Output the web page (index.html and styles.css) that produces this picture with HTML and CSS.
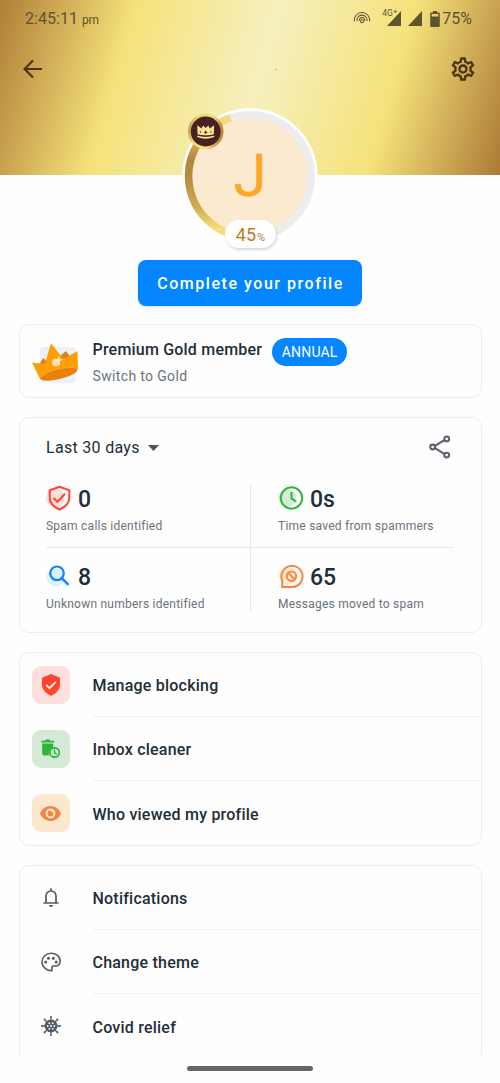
FILE: index.html
```html
<!DOCTYPE html>
<html lang="en">
<head>
<meta charset="utf-8">
<title>Profile</title>
<link rel="stylesheet" href="styles.css">
</head>
<body>
<div class="screen">
  <header class="header">
    <div class="status">
      <div class="clock">2:45:11<span class="ampm">pm</span></div>
      <div class="status-icons">
        <svg class="hotspot" width="18" height="14" viewBox="0 0 18 14" fill="none" stroke="currentColor" stroke-width="1.050"><path d="M1.300 11.400A7.700 7.700 0 0 1 9 2.600A7.700 7.700 0 0 1 16.700 11.400M4 11.200A5.100 5.100 0 0 1 9 5.100A5.100 5.100 0 0 1 14 11.200M6.300 10.900A2.800 2.800 0 0 1 9 7.500A2.800 2.800 0 0 1 11.700 10.900"/><circle cx="9" cy="11.200" r="1.500"/></svg>
        <span class="net">4G<sup>+</sup></span>
        <svg class="signal" width="14" height="15" viewBox="0 0 14 15"><path d="M14 0v15H0z" fill="currentColor"/></svg>
        <svg class="signal second" width="14" height="15" viewBox="0 0 14 15"><path d="M14 0v15H0z" fill="currentColor"/></svg>
        <svg class="battery" width="10" height="16" viewBox="0 0 10 16"><path fill="currentColor" fill-rule="evenodd" d="M3 0h4v1.400h1.800a1 1 0 0 1 1 1V15a1 1 0 0 1-1 1H1.200a1 1 0 0 1-1-1V2.400a1 1 0 0 1 1-1H3zM1.600 2.900v2.700h6.800V2.900z"/></svg>
        <span class="percent">75%</span>
      </div>
    </div>
    <div class="toolbar">
      <svg width="20" height="20" viewBox="0 0 20 20" fill="none" stroke="currentColor" stroke-width="2.200"><path d="M19 10H2M10 1.400L1.600 10L10 18.600"/></svg>
      <span class="speck"></span>
      <svg class="gear" width="28" height="28" viewBox="0 0 24 24" fill="currentColor"><path d="M19.430 12.980c.04-.32.07-.64.07-.98s-.03-.66-.07-.98l2.110-1.650c.19-.15.24-.42.12-.64l-2-3.460c-.09-.16-.26-.25-.44-.25-.06 0-.12.010-.17.030l-2.490 1c-.52-.4-1.080-.73-1.690-.98l-.38-2.650C14.460 2.180 14.250 2 14 2h-4c-.25 0-.46.18-.49.420l-.38 2.650c-.61.25-1.170.59-1.690.98l-2.490-1c-.06-.02-.12-.03-.18-.03-.17 0-.34.090-.43.250l-2 3.460c-.13.220-.07.490.12.640l2.110 1.650c-.04.320-.07.650-.07.980s.03.660.07.980l-2.110 1.650c-.19.150-.24.420-.12.640l2 3.460c.09.160.26.250.44.250.06 0 .12-.01.17-.03l2.490-1c.52.400 1.080.730 1.690.980l.38 2.650c.03.240.24.420.49.420h4c.25 0 .46-.18.49-.42l.38-2.650c.61-.25 1.170-.59 1.690-.98l2.490 1c.06.020.12.030.18.030.17 0 .34-.09.43-.25l2-3.460c.12-.22.07-.49-.12-.64l-2.110-1.650zm-1.980-1.710c.04.310.05.520.05.730s-.02.430-.05.730l-.14 1.130.89.700 1.080.840-.7 1.210-1.270-.51-1.040-.42-.9.680c-.43.320-.84.560-1.250.730l-1.060.430-.16 1.130-.2 1.350h-1.400l-.19-1.350-.16-1.130-1.060-.43c-.43-.18-.83-.41-1.230-.71l-.91-.7-1.060.430-1.270.510-.7-1.210 1.080-.84.890-.7-.14-1.130c-.03-.31-.05-.54-.05-.74s.02-.43.050-.73l.14-1.130-.89-.7-1.080-.84.700-1.210 1.270.510 1.040.420.900-.68c.43-.32.840-.56 1.250-.73l1.060-.43.160-1.130.2-1.350h1.390l.19 1.350.16 1.130 1.060.430c.43.180.83.410 1.230.710l.91.700 1.060-.43 1.270-.51.700 1.210-1.070.850-.89.700.14 1.130zM12 8c-2.210 0-4 1.790-4 4s1.790 4 4 4 4-1.790 4-4-1.790-4-4-4zm0 6c-1.100 0-2-.9-2-2s.9-2 2-2 2 .9 2 2-.9 2-2 2z"/></svg>
    </div>
  </header>

  <main class="content">
    <div class="avatar">
      <svg class="ring" width="136" height="136" viewBox="0 0 136 136">
        <defs>
          <linearGradient id="gold" x1="0" y1="0" x2="0" y2="1"><stop offset="0" stop-color="#f2dc7c"/><stop offset=".08" stop-color="#f0da78"/><stop offset=".25" stop-color="#c99e4c"/><stop offset=".36" stop-color="#b48539"/><stop offset=".5" stop-color="#b98c3f"/><stop offset=".75" stop-color="#d1ad52"/><stop offset=".93" stop-color="#f4e078"/></linearGradient>
          <linearGradient id="badge" x1="0" y1="0" x2="1" y2=".2"><stop offset="0" stop-color="#b98a3c"/><stop offset=".3" stop-color="#f0d874"/><stop offset=".7" stop-color="#f3df80"/><stop offset="1" stop-color="#b98a3c"/></linearGradient>
        </defs>
        <circle cx="68" cy="68" r="67.700" fill="#fff"/>
        <circle cx="68" cy="68" r="61.200" fill="#fbe9d0" stroke="#ededee" stroke-width="7.600"/>
        <path d="M68 129.200A61.200 61.200 0 0 1 48.600 9.900" fill="none" stroke="url(#gold)" stroke-width="7.600"/>
        <circle cx="23.700" cy="23.500" r="17.800" fill="url(#badge)"/>
        <circle cx="23.700" cy="23.500" r="15" fill="#482223"/>
        <path d="M15.300 17.200l4.200 3.300 1.600-3 2.600 2.400 2.600-2.400 1.600 3 4.200-3.300-.3 9.300q-8.100 2.200-16.200 0z" fill="#f7e392"/>
        <path d="M15.200 27.500q8.600 2.500 17 0v1.500q-8.500 3.300-17 0z" fill="#f7e392"/>
        <path d="M15.200 27q8.500 2.300 17 0" fill="none" stroke="#482223" stroke-width=".8"/>
        <path d="M23.700 22.400l.7 1.200 1.200.7-1.200.7-.7 1.200-.7-1.200-1.200-.7 1.200-.7z" fill="#482223"/><circle cx="18.400" cy="24" r=".7" fill="#482223"/><circle cx="29" cy="24" r=".7" fill="#482223"/>
      </svg>
      <span class="initial">J</span>
      <span class="progress">45<small>%</small></span>
    </div>

    <button class="complete">Complete your profile</button>

    <section class="card premium">
      <svg class="crown" width="48" height="42" viewBox="0 0 48 42">
        <rect x="8" y="3" width="35.500" height="36" rx="4" fill="#e8f1fc"/>
        <path d="M8 19l3-5 5 4-3 6zM28 12l6-5 5 7-5 5z" fill="#d98222"/>
        <path d="M0 18.500L13 20 18.500.5q.8-1 1.600 0L31.500 15 45.500 7 46 25q-3 5-15 8.500T10 36q-2-.5-3-3z" fill="#ff9f05"/>
        <path d="M9.500 33Q13 28 26 25t19.500-.5Q46 30 31 34T10 36q-2-1-.5-3z" fill="#e98106"/>
        <path d="M9.500 33Q13 28 26 25t19.500-.5" fill="none" stroke="#ffb64b" stroke-width=".7"/>
        <circle cx="24" cy="18.500" r="4" fill="#ffd9a6"/>
        <path d="M27 11l.6 4.300 4.200.3-4 1.300.3 4.100-2-3.300-4.200-.5 4-1.600z" fill="#fff6e5"/>
      </svg>
      <div class="member">
        <div class="member-title">Premium Gold member<span class="tag">ANNUAL</span></div>
        <div class="member-sub">Switch to Gold</div>
      </div>
    </section>

    <section class="card stats">
      <div class="stats-head">
        <div class="period">Last 30 days<svg width="11" height="6" viewBox="0 0 11 6"><path d="M0 0h11L5.500 6z" fill="#4b5560"/></svg></div>
        <svg width="22" height="24" viewBox="0 0 22 24" fill="none" stroke="#59616a" stroke-width="2.100"><path d="M6 10.800l9.300-5.600M6 13.200l9.300 5.600"/><circle cx="3.600" cy="12" r="2.400"/><circle cx="17.700" cy="3.900" r="2.400"/><circle cx="17.700" cy="20.100" r="2.400"/></svg>
      </div>
      <div class="grid">
        <div class="stat">
          <div class="value"><svg width="26" height="26" viewBox="0 0 26 26" fill="none" stroke="#ff4432" stroke-width="2"><circle cx="9.500" cy="13" r="9.500" fill="#ffdeda" stroke="none"/><path d="M13.500 1.700l9.800 3.500v7.300c0 5.600-3.600 9.400-9.800 12-6.200-2.600-9.800-6.400-9.800-12V5.200z"/><path d="M7.500 13l4 3.800 7.500-8"/></svg>0</div>
          <div class="label">Spam calls identified</div>
        </div>
        <div class="stat">
          <div class="value"><svg width="26" height="26" viewBox="0 0 26 26" fill="none" stroke="#2dba3c" stroke-width="2"><circle cx="9.500" cy="13" r="9" fill="#d5ead8" stroke="none"/><circle cx="13.500" cy="13" r="10.700"/><path d="M13.500 7v6.400l4.700 3.400"/></svg>0s</div>
          <div class="label">Time saved from spammers</div>
        </div>
        <div class="stat">
          <div class="value"><svg width="26" height="26" viewBox="0 0 26 26" fill="none" stroke="#0a87ff" stroke-width="2.200"><circle cx="9.500" cy="14.500" r="9" fill="#e0effe" stroke="none"/><circle cx="11" cy="10.300" r="6.800"/><path d="M15.800 15.200l6.700 6.700" stroke-width="2.500"/></svg>8</div>
          <div class="label">Unknown numbers identified</div>
        </div>
        <div class="stat">
          <div class="value"><svg width="26" height="26" viewBox="0 0 26 26" fill="none" stroke="#fb833f" stroke-width="2"><circle cx="10" cy="13" r="9" fill="#fce9cf" stroke="none"/><path d="M4.200 24V17.500A10.600 10.600 0 1 1 13.500 24z"/><circle cx="13.500" cy="13.200" r="4.700"/><path d="M10.200 9.900l6.600 6.600"/></svg>65</div>
          <div class="label">Messages moved to spam</div>
        </div>
      </div>
    </section>

    <section class="card menu">
      <div class="row"><span class="tile red"><svg width="20" height="22" viewBox="0 0 20 22"><path d="M10 0l9 3.700v6.500c0 5.200-3.600 9-9 11.500-5.400-2.500-9-6.300-9-11.500V3.700z" fill="#ff432c"/><path d="M5.300 11l3.200 3.200 6.300-6.400" fill="none" stroke="#fff" stroke-width="1.700"/></svg></span><span class="name">Manage blocking</span></div>
      <div class="row"><span class="tile green"><svg width="20" height="20" viewBox="0 0 20 20"><path d="M.3 1.700h3.500L5 .6h3.400l1.200 1.100H13v1.900H.3zM1.200 4.500h11v4.300A6 6 0 0 0 8 16.400H3q-1.800 0-1.800-1.800z" fill="#2cb43b"/><circle cx="13.600" cy="13.500" r="4.700" fill="#d5e9d7" stroke="#2cb43b" stroke-width="1.700"/><path d="M13.500 10.600v3l2.200 1.900" fill="none" stroke="#2cb43b" stroke-width="1.400"/></svg></span><span class="name">Inbox cleaner</span></div>
      <div class="row"><span class="tile orange"><svg width="21" height="15" viewBox="0 0 21 15"><path d="M10.500 0C16 0 19.500 4 21 7.500 19.500 11 16 15 10.500 15S1.500 11 0 7.500C1.500 4 5 0 10.500 0z" fill="#f48443"/><circle cx="10.500" cy="7.500" r="4.900" fill="#fce8cc"/><circle cx="10.500" cy="7.500" r="3" fill="#f48443"/><path d="M10.500 7.500V4.200h3.300v3.300z" fill="#fce8cc"/><circle cx="11.300" cy="6.700" r="1.500" fill="#f48443"/></svg></span><span class="name">Who viewed my profile</span></div>
    </section>

    <section class="card menu plain">
      <div class="row"><span class="tile"><svg width="16" height="19" viewBox="0 0 16 19" fill="none" stroke="currentColor" stroke-width="1.700"><path d="M.5 15h15M3 15V8a5 5 0 0 1 10 0v7M8 .2v2.500"/><path d="M6 17h4a2 2 0 0 1-4 0z" fill="currentColor" stroke="none"/></svg></span><span class="name">Notifications</span></div>
      <div class="row"><span class="tile"><svg width="20" height="20" viewBox="0 0 20 20" fill="none" stroke="currentColor" stroke-width="1.600"><path d="M10.900 18.700C5 18.700 1 14.700 1 9.900 1 5 5 1.200 10.100 1.200S19.100 4.600 19.100 9q0 5-5 5h-1.700q-1.800.2-1.500 2.200z"/><g fill="currentColor" stroke="none"><circle cx="4.700" cy="9.900" r="1.500"/><circle cx="7.500" cy="6.200" r="1.500"/><circle cx="12.300" cy="6.200" r="1.500"/><circle cx="15.200" cy="9.900" r="1.500"/></g></svg></span><span class="name">Change theme</span></div>
      <div class="row"><span class="tile"><svg width="20" height="20" viewBox="0 0 20 20"><path d="M10 .8v18.400M.8 10h18.400M3.500 3.500l13 13M16.500 3.500l-13 13M9 .8h2M9 19.200h2M.8 9v2M19.200 9v2M2.800 4.200l1.400-1.400M15.800 17.200l1.400-1.400M2.800 15.800l1.400 1.400M15.800 2.800l1.400 1.400" stroke="currentColor" stroke-width="1.300"/><circle cx="10" cy="10" r="6.500" fill="currentColor"/><g fill="#fff"><circle cx="10" cy="10" r="1"/><circle cx="6.700" cy="10" r=".9"/><circle cx="13.300" cy="10" r=".9"/><circle cx="8.300" cy="7.200" r=".9"/><circle cx="11.700" cy="7.200" r=".9"/><circle cx="8.300" cy="12.800" r=".9"/><circle cx="11.700" cy="12.800" r=".9"/></g></svg></span><span class="name">Covid relief</span></div>
    </section>
  </main>
  <footer class="nav"><span class="handle"></span></footer>
</div>
</body>
</html>
```
FILE: styles.css
```css
* { box-sizing: border-box; }
body { margin: 0; background: #fefefe; font-family: Roboto, sans-serif; color: #232d38; }
svg { display: block; flex: none; }
.screen { width: 500px; height: 1083px; display: flex; flex-direction: column; overflow: hidden; }

.header {
  height: 175px; flex: none;
  background: linear-gradient(106deg, #af7e37 0%, #f5e27a 25%, #f6f0bf 51%, #f5e27a 76%, #ac7a36 100%);
}
.status { height: 38px; padding: 0 28px 0 25px; display: flex; justify-content: space-between; align-items: center; color: #5f5430; }
.clock { font-size: 16px; line-height: 20px; letter-spacing: .05px; padding-top: 1px; }
.ampm { font-size: 12px; margin-left: 4px; letter-spacing: -.4px; }
.status-icons { display: flex; align-items: center; }
.hotspot { margin-right: 11px; margin-top: -4px; }
.net { font-size: 8.500px; line-height: 10px; width: 10px; margin-top: -12px; white-space: nowrap; }
.net sup { font-size: 8px; line-height: 0; vertical-align: 2px; }
.signal { margin-left: -5px; margin-top: -2px; }
.signal.second { margin-left: 7px; }
.battery { margin: -1px 2px 0 8px; }
.percent { font-size: 16px; line-height: 20px; }
.toolbar { height: 62px; padding: 0 23px; display: flex; align-items: center; justify-content: space-between; color: #493512; }
.speck { width: 2px; height: 1px; margin-left: 60px; background: #c5b56c; }

.content { height: 880px; flex: none; display: flex; flex-direction: column; align-items: center; clip-path: inset(-100px 0 0 0); }
.avatar { width: 136px; height: 136px; margin-top: -67px; flex: none; display: grid; position: relative; }
.avatar > * { grid-area: 1 / 1; }
.initial { place-self: center; font-size: 60px; line-height: 60px; color: #ffa726; -webkit-text-stroke: .3px #ffa726; }
.progress {
  position: absolute; left: 43px; top: 112px; width: 51px; height: 28px; border-radius: 14px;
  background: #fff; box-shadow: 1px 2px 3px rgba(0,0,0,.15);
  color: #bd7c1b; font-size: 18px; line-height: 29px; text-align: center;
}
.progress small { font-size: 11px; margin-left: 1px; }
.complete {
  margin: 16px 0 0; width: 224px; height: 46px; flex: none; border: 0; border-radius: 8px;
  background: #0386ff; color: #fff; font: 500 16px/46px Roboto, sans-serif; letter-spacing: 1.540px; padding: 1px 0 0 1px;
  box-shadow: 0 1px 2px rgba(0,0,0,.15);
}

.card { width: 463px; margin-top: 19px; flex: none; border: 1.300px solid #ebedef; border-radius: 10px; }
.premium { height: 74px; display: flex; padding: 12px 0 0 12px; margin-top: 18px; }
.crown { margin-top: 7px; }
.member { margin-left: 13px; }
.member-title { display: flex; align-items: flex-start; height: 29px; font-size: 16px; font-weight: 500; line-height: 26px; letter-spacing: .2px; }
.tag { margin: 1px 0 0 10px; width: 75px; height: 28px; border-radius: 14px; background: #0386ff; color: #fff; font-size: 14px; font-weight: 400; line-height: 29px; letter-spacing: .2px; text-align: center; }
.member-sub { font-size: 14px; line-height: 20px; color: #6a727a; letter-spacing: .350px; }

.stats { height: 216px; padding: 16px 26px 0 26.500px; }
.stats-head { display: flex; align-items: center; justify-content: space-between; height: 26px; padding-right: 4px; }
.period { display: flex; align-items: center; gap: 8px; font-size: 16px; letter-spacing: .3px; padding-top: 1px; }
.grid { display: grid; grid-template-columns: 204px 204px; grid-template-rows: 64px 64px; margin-top: 24px; }
.stat:nth-child(even) { padding-left: 27px; border-left: 1px solid #e6e8ea; }
.stat:nth-child(-n+2) { border-bottom: 1px solid #e6e8ea; }
.value { display: flex; align-items: center; gap: 6px; height: 27px; font-size: 23px; font-weight: 500; line-height: 27px; padding-top: 3px; }
.value svg { margin: -3px 0 0; }
.label { font-size: 12px; line-height: 16px; margin-top: 7px; color: #6a727a; letter-spacing: .240px; white-space: nowrap; }
.stat:nth-child(n+3) .value { margin-top: 14px; }

.menu { height: 194px; padding: 0 0 0 12px; }
.row { height: 64.500px; display: flex; align-items: center; gap: 23px; }
.menu .row:first-child { height: 63.500px; }
.tile { width: 38px; height: 38px; border-radius: 9px; display: grid; place-items: center; flex: none; }
.red { background: #ffdfdc; }
.green { background: #d5e9d7; }
.orange { background: #fce8cc; }
.name { flex: 1; align-self: stretch; display: flex; align-items: center; font-size: 16px; font-weight: 500; letter-spacing: .220px; padding-top: 2px; }
.row:not(:last-child) .name { border-bottom: 1px solid #f0f1f2; }
.plain { height: 240px; color: #535d67; }
.plain .name { color: #232d38; }
.nav { flex: 1; display: flex; justify-content: center; background: #fefefe; }
.handle { width: 126px; height: 5px; border-radius: 3px; background: #666; margin-top: 11px; }
```
